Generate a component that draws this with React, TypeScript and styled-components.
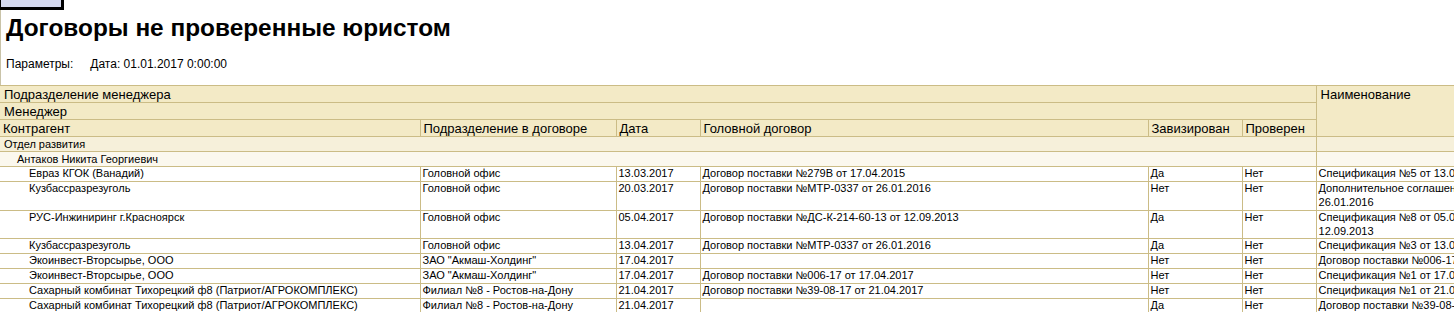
import styled, { createGlobalStyle } from "styled-components";

const LINE = "#cbbc86";

const GlobalStyle = createGlobalStyle`
  html, body {
    margin: 0;
    padding: 0;
    overflow: hidden;
    background: #ffffff;
  }
  body {
    font-family: "Liberation Sans", Arial, sans-serif;
    color: #000000;
  }
`;

type Row = {
  contractor: string;
  division: string;
  date: string;
  mainContract: string;
  approved: string;
  checked: string;
  name: string[];
};

const rows: Row[] = [
  {
    contractor: "Евраз КГОК (Ванадий)",
    division: "Головной офис",
    date: "13.03.2017",
    mainContract: "Договор поставки №279В от 17.04.2015",
    approved: "Да",
    checked: "Нет",
    name: ["Спецификация №5 от 13.03.2017"],
  },
  {
    contractor: "Кузбассразрезуголь",
    division: "Головной офис",
    date: "20.03.2017",
    mainContract: "Договор поставки №МТР-0337 от 26.01.2016",
    approved: "Нет",
    checked: "Нет",
    name: ["Дополнительное соглашение №2 к договору №МТР-0337 от", "26.01.2016"],
  },
  {
    contractor: "РУС-Инжиниринг г.Красноярск",
    division: "Головной офис",
    date: "05.04.2017",
    mainContract: "Договор поставки №ДС-К-214-60-13 от 12.09.2013",
    approved: "Да",
    checked: "Нет",
    name: ["Спецификация №8 от 05.04.2017 к договору №ДС-К-214-60-13 от", "12.09.2013"],
  },
  {
    contractor: "Кузбассразрезуголь",
    division: "Головной офис",
    date: "13.04.2017",
    mainContract: "Договор поставки №МТР-0337 от 26.01.2016",
    approved: "Да",
    checked: "Нет",
    name: ["Спецификация №3 от 13.04.2017"],
  },
  {
    contractor: "Экоинвест-Вторсырье, ООО",
    division: "ЗАО \"Акмаш-Холдинг\"",
    date: "17.04.2017",
    mainContract: "",
    approved: "Нет",
    checked: "Нет",
    name: ["Договор поставки №006-17 от 17.04.2017"],
  },
  {
    contractor: "Экоинвест-Вторсырье, ООО",
    division: "ЗАО \"Акмаш-Холдинг\"",
    date: "17.04.2017",
    mainContract: "Договор поставки №006-17 от 17.04.2017",
    approved: "Нет",
    checked: "Нет",
    name: ["Спецификация №1 от 17.04.2017"],
  },
  {
    contractor: "Сахарный комбинат Тихорецкий ф8 (Патриот/АГРОКОМПЛЕКС)",
    division: "Филиал №8 - Ростов-на-Дону",
    date: "21.04.2017",
    mainContract: "Договор поставки №39-08-17 от 21.04.2017",
    approved: "Нет",
    checked: "Нет",
    name: ["Спецификация №1 от 21.04.2017"],
  },
  {
    contractor: "Сахарный комбинат Тихорецкий ф8 (Патриот/АГРОКОМПЛЕКС)",
    division: "Филиал №8 - Ростов-на-Дону",
    date: "21.04.2017",
    mainContract: "",
    approved: "Да",
    checked: "Нет",
    name: ["Договор поставки №39-08-17 от 21.04.2017"],
  },
];

const colWidths = [420, 196, 84, 448, 94, 74, 400];

export default function App() {
  return (
    <Page>
      <GlobalStyle />
      <TopSection>
        <CollapseButton />
        <Title>Договоры не проверенные юристом</Title>
        <Params>
          <span>Параметры:</span>
          <span>Дата: 01.01.2017 0:00:00</span>
        </Params>
      </TopSection>
      <Report>
        <colgroup>
          {colWidths.map((w, i) => (
            <col key={i} style={{ width: w }} />
          ))}
        </colgroup>
        <thead>
          <tr>
            <HeadCell colSpan={6}>Подразделение менеджера</HeadCell>
            <HeadCell rowSpan={3} $right>Наименование</HeadCell>
          </tr>
          <tr>
            <HeadCell colSpan={6}>Менеджер</HeadCell>
          </tr>
          <tr>
            <HeadCell $split>Контрагент</HeadCell>
            <HeadCell $split>Подразделение в договоре</HeadCell>
            <HeadCell $split>Дата</HeadCell>
            <HeadCell $split>Головной договор</HeadCell>
            <HeadCell $split>Завизирован</HeadCell>
            <HeadCell $split>Проверен</HeadCell>
          </tr>
        </thead>
        <tbody>
          <tr>
            <GroupCell colSpan={6} $level={1}>Отдел развития</GroupCell>
            <GroupCell $level={1} />
          </tr>
          <tr>
            <GroupCell colSpan={6} $level={2}>Антаков Никита Георгиевич</GroupCell>
            <GroupCell $level={2} />
          </tr>
          {rows.map((r, i) => (
            <tr key={i}>
              <DataCell $indent={29}>{r.contractor}</DataCell>
              <DataCell>{r.division}</DataCell>
              <DataCell>{r.date}</DataCell>
              <DataCell>{r.mainContract}</DataCell>
              <DataCell>{r.approved}</DataCell>
              <DataCell>{r.checked}</DataCell>
              <DataCell>
                {r.name.map((line, j) => (
                  <div key={j}>{line}</div>
                ))}
              </DataCell>
            </tr>
          ))}
        </tbody>
      </Report>
    </Page>
  );
}

const Page = styled.div`
  width: 1716px;
`;

const TopSection = styled.div`
  border-left: 1px solid #c9c3a8;
  height: 85px;
  box-sizing: border-box;
`;

const CollapseButton = styled.div`
  width: 60px;
  height: 7px;
  margin-left: -1px;
  background: #d5d9ef;
  border-left: 1px solid #000000;
  border-right: 3px solid #000000;
  border-bottom: 3px solid #000000;
`;

const Title = styled.h1`
  margin: 4px 0 0 5px;
  font-size: 24.4px;
  font-weight: bold;
  line-height: 28px;
  white-space: nowrap;
`;

const Params = styled.div`
  margin: 15px 0 0 5px;
  font-size: 12px;
  line-height: 14px;
  display: flex;
  gap: 17px;
`;

const Report = styled.table`
  width: 1716px;
  table-layout: fixed;
  border-collapse: collapse;
  border-top: 1px solid ${LINE};
`;

const HeadCell = styled.th<{ $split?: boolean; $right?: boolean }>`
  background: #f3eac6;
  font-weight: normal;
  font-size: 13px;
  text-align: left;
  vertical-align: top;
  line-height: 15px;
  height: 15px;
  padding: 1px 0 0 ${(p) => (p.$split ? "3px" : "4px")};
  border-bottom: 1px solid ${LINE};
  border-right: ${(p) => (p.$split ? `1px solid ${LINE}` : "none")};
  border-left: ${(p) => (p.$right ? `1px solid ${LINE}` : "none")};
  white-space: nowrap;
  overflow: hidden;
`;

const GroupCell = styled.td<{ $level: number }>`
  background: ${(p) => (p.$level === 1 ? "#f6f0da" : "#fbf8ee")};
  font-size: 11px;
  line-height: 14.2px;
  height: 14.2px;
  padding: 0 0 0 ${(p) => (p.$level === 1 ? "4px" : "17px")};
  border-bottom: 1px solid ${LINE};
  border-right: 1px solid ${LINE};
  white-space: nowrap;
  overflow: hidden;
`;

const DataCell = styled.td<{ $indent?: number }>`
  font-size: 11px;
  line-height: 13.8px;
  vertical-align: top;
  padding: 0 0 0 ${(p) => p.$indent ?? 2}px;
  border-bottom: 1px solid ${LINE};
  border-right: 1px solid ${LINE};
  white-space: nowrap;
  overflow: hidden;
`;
